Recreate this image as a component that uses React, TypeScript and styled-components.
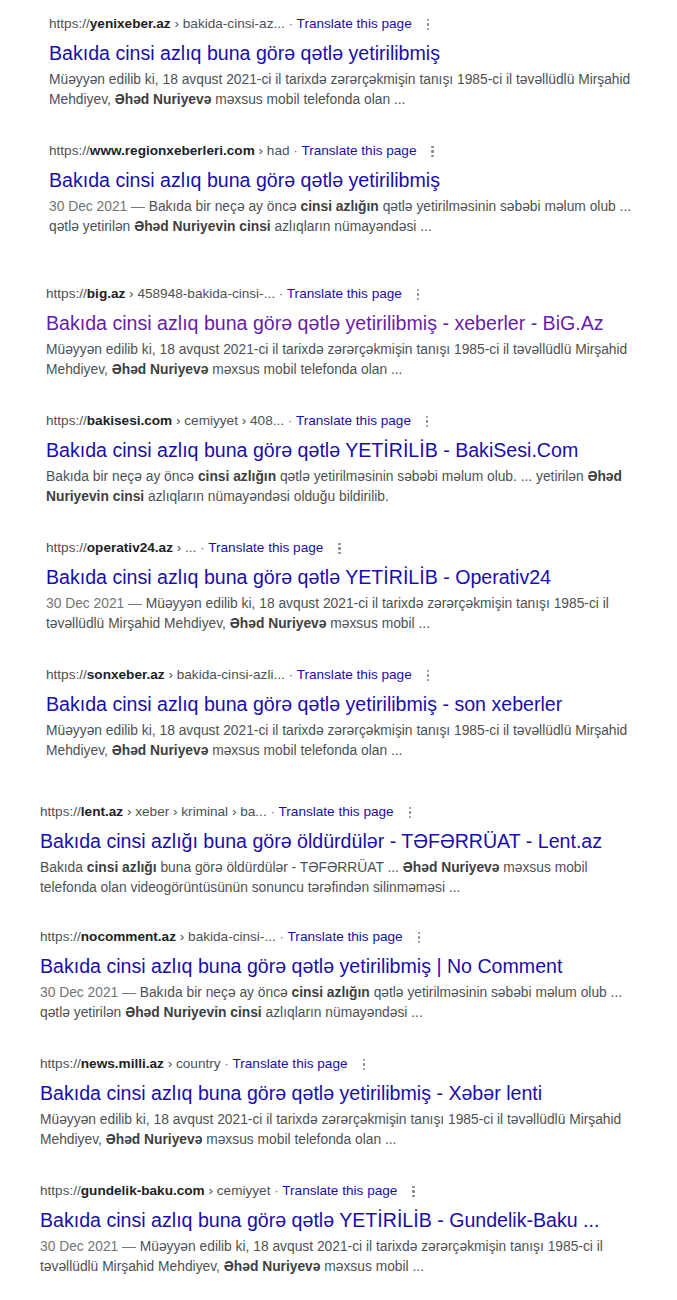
import React from 'react';
import styled, { createGlobalStyle } from 'styled-components';

const GlobalStyle = createGlobalStyle`
    body {
        margin: 0;
        background: #ffffff;
        font-family: 'Liberation Sans', Arial, sans-serif;
    }
`;

interface Part {
    text: string;
    bold?: boolean;
}

interface Result {
    domain: string;
    path: string;
    title: string;
    visited?: boolean;
    date?: string;
    snippet: Part[];
    indent: number;
    gap: number;
}

const p = (text: string): Part => ({ text });
const b = (text: string): Part => ({ text, bold: true });

const mirsahid: Part[] = [
    p('Müəyyən edilib ki, 18 avqust 2021-ci il tarixdə zərərçəkmişin tanışı 1985-ci il təvəllüdlü Mirşahid Mehdiyev, '),
    b('Əhəd Nuriyevə'),
    p(' məxsus mobil telefonda olan ...'),
];

const olub: Part[] = [
    p('Bakıda bir neçə ay öncə '),
    b('cinsi azlığın'),
    p(' qətlə yetirilməsinin səbəbi məlum olub ... qətlə yetirilən '),
    b('Əhəd Nuriyevin cinsi'),
    p(' azlıqların nümayəndəsi ...'),
];

const mobil: Part[] = [
    p('Müəyyən edilib ki, 18 avqust 2021-ci il tarixdə zərərçəkmişin tanışı 1985-ci il təvəllüdlü Mirşahid Mehdiyev, '),
    b('Əhəd Nuriyevə'),
    p(' məxsus mobil ...'),
];

const results: Result[] = [
    {
        domain: 'yenixeber.az',
        path: 'bakida-cinsi-az...',
        title: 'Bakıda cinsi azlıq buna görə qətlə yetirilibmiş',
        snippet: mirsahid,
        indent: 49,
        gap: 14,
    },
    {
        domain: 'www.regionxeberleri.com',
        path: 'had',
        title: 'Bakıda cinsi azlıq buna görə qətlə yetirilibmiş',
        date: '30 Dec 2021',
        snippet: olub,
        indent: 49,
        gap: 31,
    },
    {
        domain: 'big.az',
        path: '458948-bakida-cinsi-...',
        title: 'Bakıda cinsi azlıq buna görə qətlə yetirilibmiş - xeberler - BiG.Az',
        visited: true,
        snippet: mirsahid,
        indent: 46,
        gap: 47,
    },
    {
        domain: 'bakisesi.com',
        path: 'cemiyyet › 408...',
        title: 'Bakıda cinsi azlıq buna görə qətlə YETİRİLİB - BakiSesi.Com',
        snippet: [
            p('Bakıda bir neçə ay öncə '),
            b('cinsi azlığın'),
            p(' qətlə yetirilməsinin səbəbi məlum olub. ... yetirilən '),
            b('Əhəd Nuriyevin cinsi'),
            p(' azlıqların nümayəndəsi olduğu bildirilib.'),
        ],
        indent: 46,
        gap: 31,
    },
    {
        domain: 'operativ24.az',
        path: '...',
        title: 'Bakıda cinsi azlıq buna görə qətlə YETİRİLİB - Operativ24',
        date: '30 Dec 2021',
        snippet: mobil,
        indent: 46,
        gap: 31,
    },
    {
        domain: 'sonxeber.az',
        path: 'bakida-cinsi-azli...',
        title: 'Bakıda cinsi azlıq buna görə qətlə yetirilibmiş - son xeberler',
        snippet: mirsahid,
        indent: 46,
        gap: 31,
    },
    {
        domain: 'lent.az',
        path: 'xeber › kriminal › ba...',
        title: 'Bakıda cinsi azlığı buna görə öldürdülər - TƏFƏRRÜAT - Lent.az',
        snippet: [
            p('Bakıda '),
            b('cinsi azlığı'),
            p(' buna görə öldürdülər - TƏFƏRRÜAT ... '),
            b('Əhəd Nuriyevə'),
            p(' məxsus mobil telefonda olan videogörüntüsünün sonuncu tərəfindən silinməməsi ...'),
        ],
        indent: 40,
        gap: 41,
    },
    {
        domain: 'nocomment.az',
        path: 'bakida-cinsi-...',
        title: 'Bakıda cinsi azlıq buna görə qətlə yetirilibmiş | No Comment',
        date: '30 Dec 2021',
        snippet: olub,
        indent: 40,
        gap: 29,
    },
    {
        domain: 'news.milli.az',
        path: 'country',
        title: 'Bakıda cinsi azlıq buna görə qətlə yetirilibmiş - Xəbər lenti',
        snippet: mirsahid,
        indent: 40,
        gap: 31,
    },
    {
        domain: 'gundelik-baku.com',
        path: 'cemiyyet',
        title: 'Bakıda cinsi azlıq buna görə qətlə YETİRİLİB - Gundelik-Baku ...',
        date: '30 Dec 2021',
        snippet: mobil,
        indent: 40,
        gap: 31,
    },
];

const Page = styled.div`
    display: flex;
    flex-direction: column;
    padding-bottom: 30px;
`;

const Item = styled.div<{ $indent: number; $gap: number }>`
    display: flex;
    flex-direction: column;
    margin-left: ${props => props.$indent}px;
    padding-top: ${props => props.$gap}px;
    width: 588px;
`;

const UrlRow = styled.div`
    height: 20px;
    line-height: 20px;
    font-size: 13.6px;
    color: #4d5156;
    white-space: nowrap;
`;

const Domain = styled.span`
    color: #202124;
    font-weight: bold;
`;

const Dot = styled.span`
    color: #70757a;
`;

const Translate = styled.span`
    color: #1a0dab;
`;

const Kebab = styled.span`
    display: inline-flex;
    flex-direction: column;
    gap: 2px;
    margin-left: 15px;
    vertical-align: middle;

    i {
        width: 2.5px;
        height: 2.5px;
        border-radius: 50%;
        background: #80868b;
    }
`;

const Title = styled.div<{ $visited?: boolean }>`
    margin-top: 5px;
    font-size: 19.6px;
    line-height: 28px;
    color: ${props => (props.$visited ? '#681da8' : '#1a0dab')};
    white-space: nowrap;
`;

const Snippet = styled.div`
    margin-top: 3px;
    font-size: 13.8px;
    line-height: 20px;
    color: #4d5156;

    b {
        color: #3c4043;
        font-weight: bold;
    }
`;

const DateText = styled.span`
    color: #70757a;
`;

const App = (): JSX.Element => (
    <>
        <GlobalStyle />
        <Page>
            {results.map(r => (
                <Item key={r.domain} $indent={r.indent} $gap={r.gap}>
                    <UrlRow>
                        https://<Domain>{r.domain}</Domain> › {r.path}
                        <Dot> · </Dot>
                        <Translate>Translate this page</Translate>
                        <Kebab>
                            <i />
                            <i />
                            <i />
                        </Kebab>
                    </UrlRow>
                    <Title $visited={r.visited}>{r.title}</Title>
                    <Snippet>
                        {r.date && <DateText>{r.date} — </DateText>}
                        {r.snippet.map((s, i) =>
                            s.bold ? <b key={i}>{s.text}</b> : <span key={i}>{s.text}</span>,
                        )}
                    </Snippet>
                </Item>
            ))}
        </Page>
    </>
);

export default App;
